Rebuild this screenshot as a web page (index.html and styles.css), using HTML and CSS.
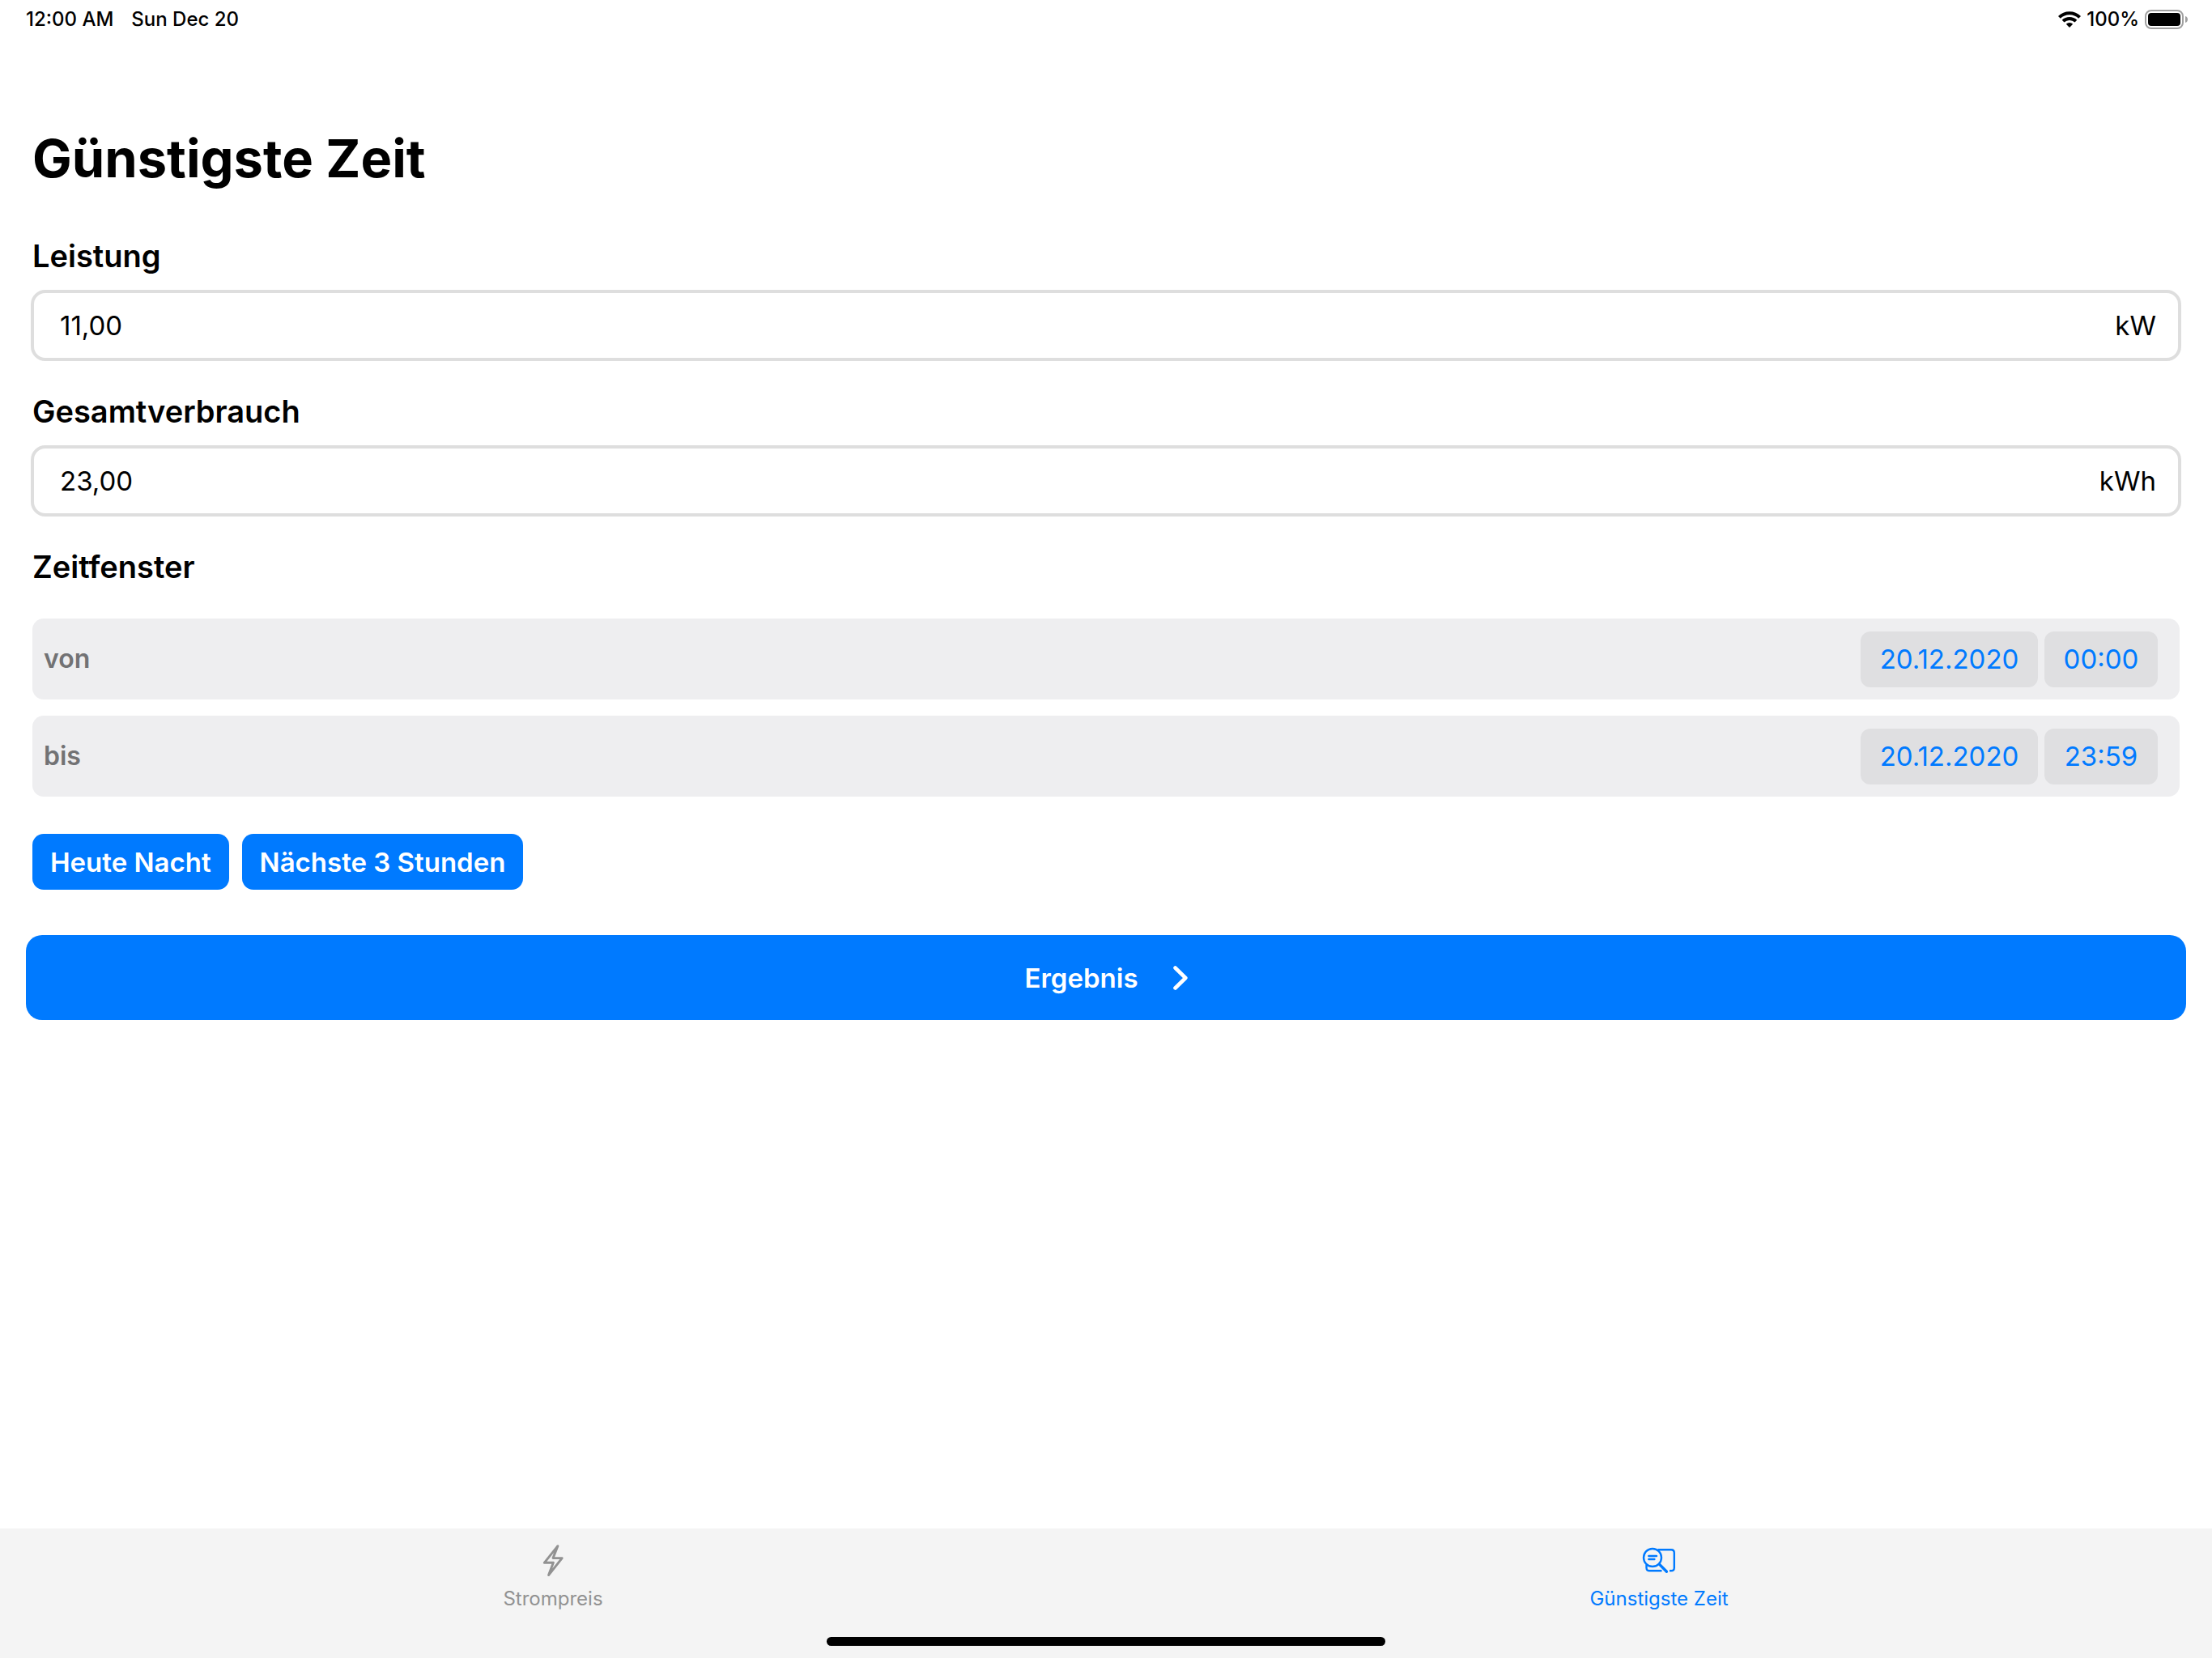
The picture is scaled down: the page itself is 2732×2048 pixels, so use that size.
FILE: index.html
```html
<!DOCTYPE html>
<html lang="de">
<head>
<meta charset="utf-8">
<meta name="viewport" content="width=device-width, initial-scale=1">
<title>Günstigste Zeit</title>
<link rel="stylesheet" href="styles.css">
</head>
<body>
<div class="app">
  <header class="status">
    <div class="status-group status-left">
      <span>12:00 AM</span>
      <span>Sun Dec 20</span>
    </div>
    <div class="status-group status-right">
      <svg class="wifi" viewBox="0 0 28 20" aria-hidden="true">
        <g fill="none" stroke="currentColor" stroke-width="4">
          <path d="M1.4 7.4a18 18 0 0 1 25.2 0"/>
          <path d="M6.1 12.1a11.4 11.4 0 0 1 15.8 0"/>
        </g>
        <path d="M14 20l-4.2-4.3a6.2 6.2 0 0 1 8.4 0z" fill="currentColor"/>
      </svg>
      <span>100%</span>
      <svg class="battery" viewBox="0 0 54 24" aria-hidden="true">
        <rect x="1" y="1" width="46" height="22" rx="7" fill="none" stroke="#a0a0a0" stroke-width="2"/>
        <rect x="4" y="4" width="40" height="16" rx="4" fill="currentColor"/>
        <path d="M50 8c4 1 4 7 0 8z" fill="#a0a0a0"/>
      </svg>
    </div>
  </header>

  <main class="content">
    <h1 class="title">Günstigste Zeit</h1>

    <form class="form">
      <label class="heading" for="power">Leistung</label>
      <div class="field">
        <input class="field-input" id="power" type="text" inputmode="decimal" value="11,00">
        <span class="field-unit">kW</span>
      </div>

      <label class="heading" for="usage">Gesamtverbrauch</label>
      <div class="field">
        <input class="field-input" id="usage" type="text" inputmode="decimal" value="23,00">
        <span class="field-unit">kWh</span>
      </div>

      <h2 class="heading">Zeitfenster</h2>
      <div class="ranges">
        <div class="range" role="group" aria-labelledby="from">
          <span class="range-label" id="from">von</span>
          <button class="chip chip-date" type="button">20.12.2020</button>
          <button class="chip chip-time" type="button">00:00</button>
        </div>
        <div class="range" role="group" aria-labelledby="to">
          <span class="range-label" id="to">bis</span>
          <button class="chip chip-date" type="button">20.12.2020</button>
          <button class="chip chip-time" type="button">23:59</button>
        </div>
      </div>

      <div class="presets">
        <button class="preset" type="button">Heute Nacht</button>
        <button class="preset" type="button">Nächste 3 Stunden</button>
      </div>

      <button class="submit" type="button">
        <span>Ergebnis</span>
        <svg class="chevron" viewBox="0 0 18 30" aria-hidden="true">
          <path d="M2.5 2.5L15.3 15 2.5 27.5" fill="none" stroke="currentColor" stroke-width="4.6" stroke-linecap="round" stroke-linejoin="round"/>
        </svg>
      </button>
    </form>
  </main>

  <footer class="footer">
    <nav class="tabs">
      <a class="tab" href="#strompreis">
        <svg class="tab-icon" viewBox="0 0 42 42" aria-hidden="true">
          <path d="M26.9 3.6L10.3 24.3H21.4L15.6 39.6 32.2 18.6H21z" fill="none" stroke="currentColor" stroke-width="2.9" stroke-linejoin="round"/>
        </svg>
        <span>Strompreis</span>
      </a>
      <a class="tab tab-active" href="#zeit" aria-current="page">
        <svg class="tab-icon" viewBox="0 0 42 42" aria-hidden="true">
          <g fill="none" stroke="currentColor" stroke-width="2.4" stroke-linecap="round">
            <circle cx="13" cy="18" r="11"/>
            <path d="M8.3 16H18M8.3 20H15.4"/>
            <path d="M21.6 26.4L30.4 35.2" stroke-width="3.4"/>
            <path d="M19.5 8.2H36Q39.8 8.2 39.8 12V30.5Q39.8 34.3 36 34.3H34M5.5 27V30.5Q5.5 34.3 9.3 34.3H24.5" stroke-linecap="butt"/>
          </g>
        </svg>
        <span>Günstigste Zeit</span>
      </a>
    </nav>
    <div class="home-indicator"></div>
  </footer>
</div>
</body>
</html>
```
FILE: styles.css
```css
* {
  box-sizing: border-box;
}

body {
  margin: 0;
  background: #fff;
  color: #000;
  font-family: Inter, "Liberation Sans", sans-serif;
  font-size: 33px;
  line-height: 40px;
}

button,
input {
  margin: 0;
  border: 0;
  font: inherit;
  color: inherit;
}

button {
  cursor: pointer;
}

.app {
  display: flex;
  flex-direction: column;
  min-height: 100vh;
}

.status {
  display: flex;
  justify-content: space-between;
  padding: 8px 29px 8px 32px;
  font-size: 24px;
  font-weight: 500;
  line-height: 32px;
}

.status-group {
  display: flex;
  align-items: center;
}

.status-left {
  gap: 22px;
}

.status-right {
  gap: 7px;
}

.wifi {
  width: 28px;
  height: 20px;
}

.battery {
  width: 54px;
  height: 24px;
}

.content {
  flex: 1;
  padding: 108px 32px 32px;
}

.title {
  margin: 0 8px 56px;
  font-size: 65px;
  font-weight: 700;
  line-height: 80px;
}

.form {
  display: flex;
  flex-direction: column;
}

.heading {
  margin: 0 8px;
  padding-bottom: 18px;
  font-size: 38px;
  font-weight: 600;
  line-height: 48px;
}

.field {
  display: flex;
  align-items: center;
  height: 88px;
  margin: 0 6px 38px;
  padding: 0 27px 0 32px;
  border: 4px solid #dedede;
  border-radius: 18px;
}

.field-input {
  flex: 1;
  min-width: 0;
  padding: 0;
  background: none;
}

.ranges {
  display: flex;
  flex-direction: column;
  gap: 20px;
  margin: 22px 8px 46px;
}

.range {
  display: flex;
  align-items: center;
  gap: 8px;
  height: 100px;
  padding: 0 27px 0 14px;
  border-radius: 14px;
  background: #eeeef0;
}

.range-label {
  flex: 1;
  color: #727274;
  font-size: 32px;
  font-weight: 600;
}

.chip {
  height: 69px;
  padding: 0;
  border-radius: 12px;
  background: #dfdfe1;
  color: #007aff;
}

.chip-date {
  width: 219px;
}

.chip-time {
  width: 140px;
}

.presets {
  display: flex;
  gap: 16px;
  margin: 0 8px 56px;
}

.preset {
  height: 69px;
  padding: 0 22px;
  border-radius: 14px;
  background: #007aff;
  color: #fff;
  font-weight: 600;
}

.submit {
  display: flex;
  align-items: center;
  justify-content: center;
  gap: 43px;
  height: 105px;
  border-radius: 20px;
  background: #007aff;
  color: #fff;
  font-weight: 600;
}

.chevron {
  width: 18px;
  height: 30px;
}

.footer {
  display: flex;
  flex-direction: column;
  align-items: center;
  height: 160px;
  background: #f4f4f4;
}

.tabs {
  display: flex;
  flex: 1;
  align-self: stretch;
}

.tab {
  display: flex;
  flex: 1;
  flex-direction: column;
  align-items: center;
  gap: 13px;
  padding-top: 18px;
  color: #929292;
  font-size: 24px;
  line-height: 28px;
  text-decoration: none;
}

.tab-active {
  color: #007aff;
}

.tab-icon {
  width: 42px;
  height: 42px;
}

.home-indicator {
  width: 690px;
  max-width: 60%;
  height: 11px;
  margin-bottom: 15px;
  border-radius: 6px;
  background: #000;
}
```
